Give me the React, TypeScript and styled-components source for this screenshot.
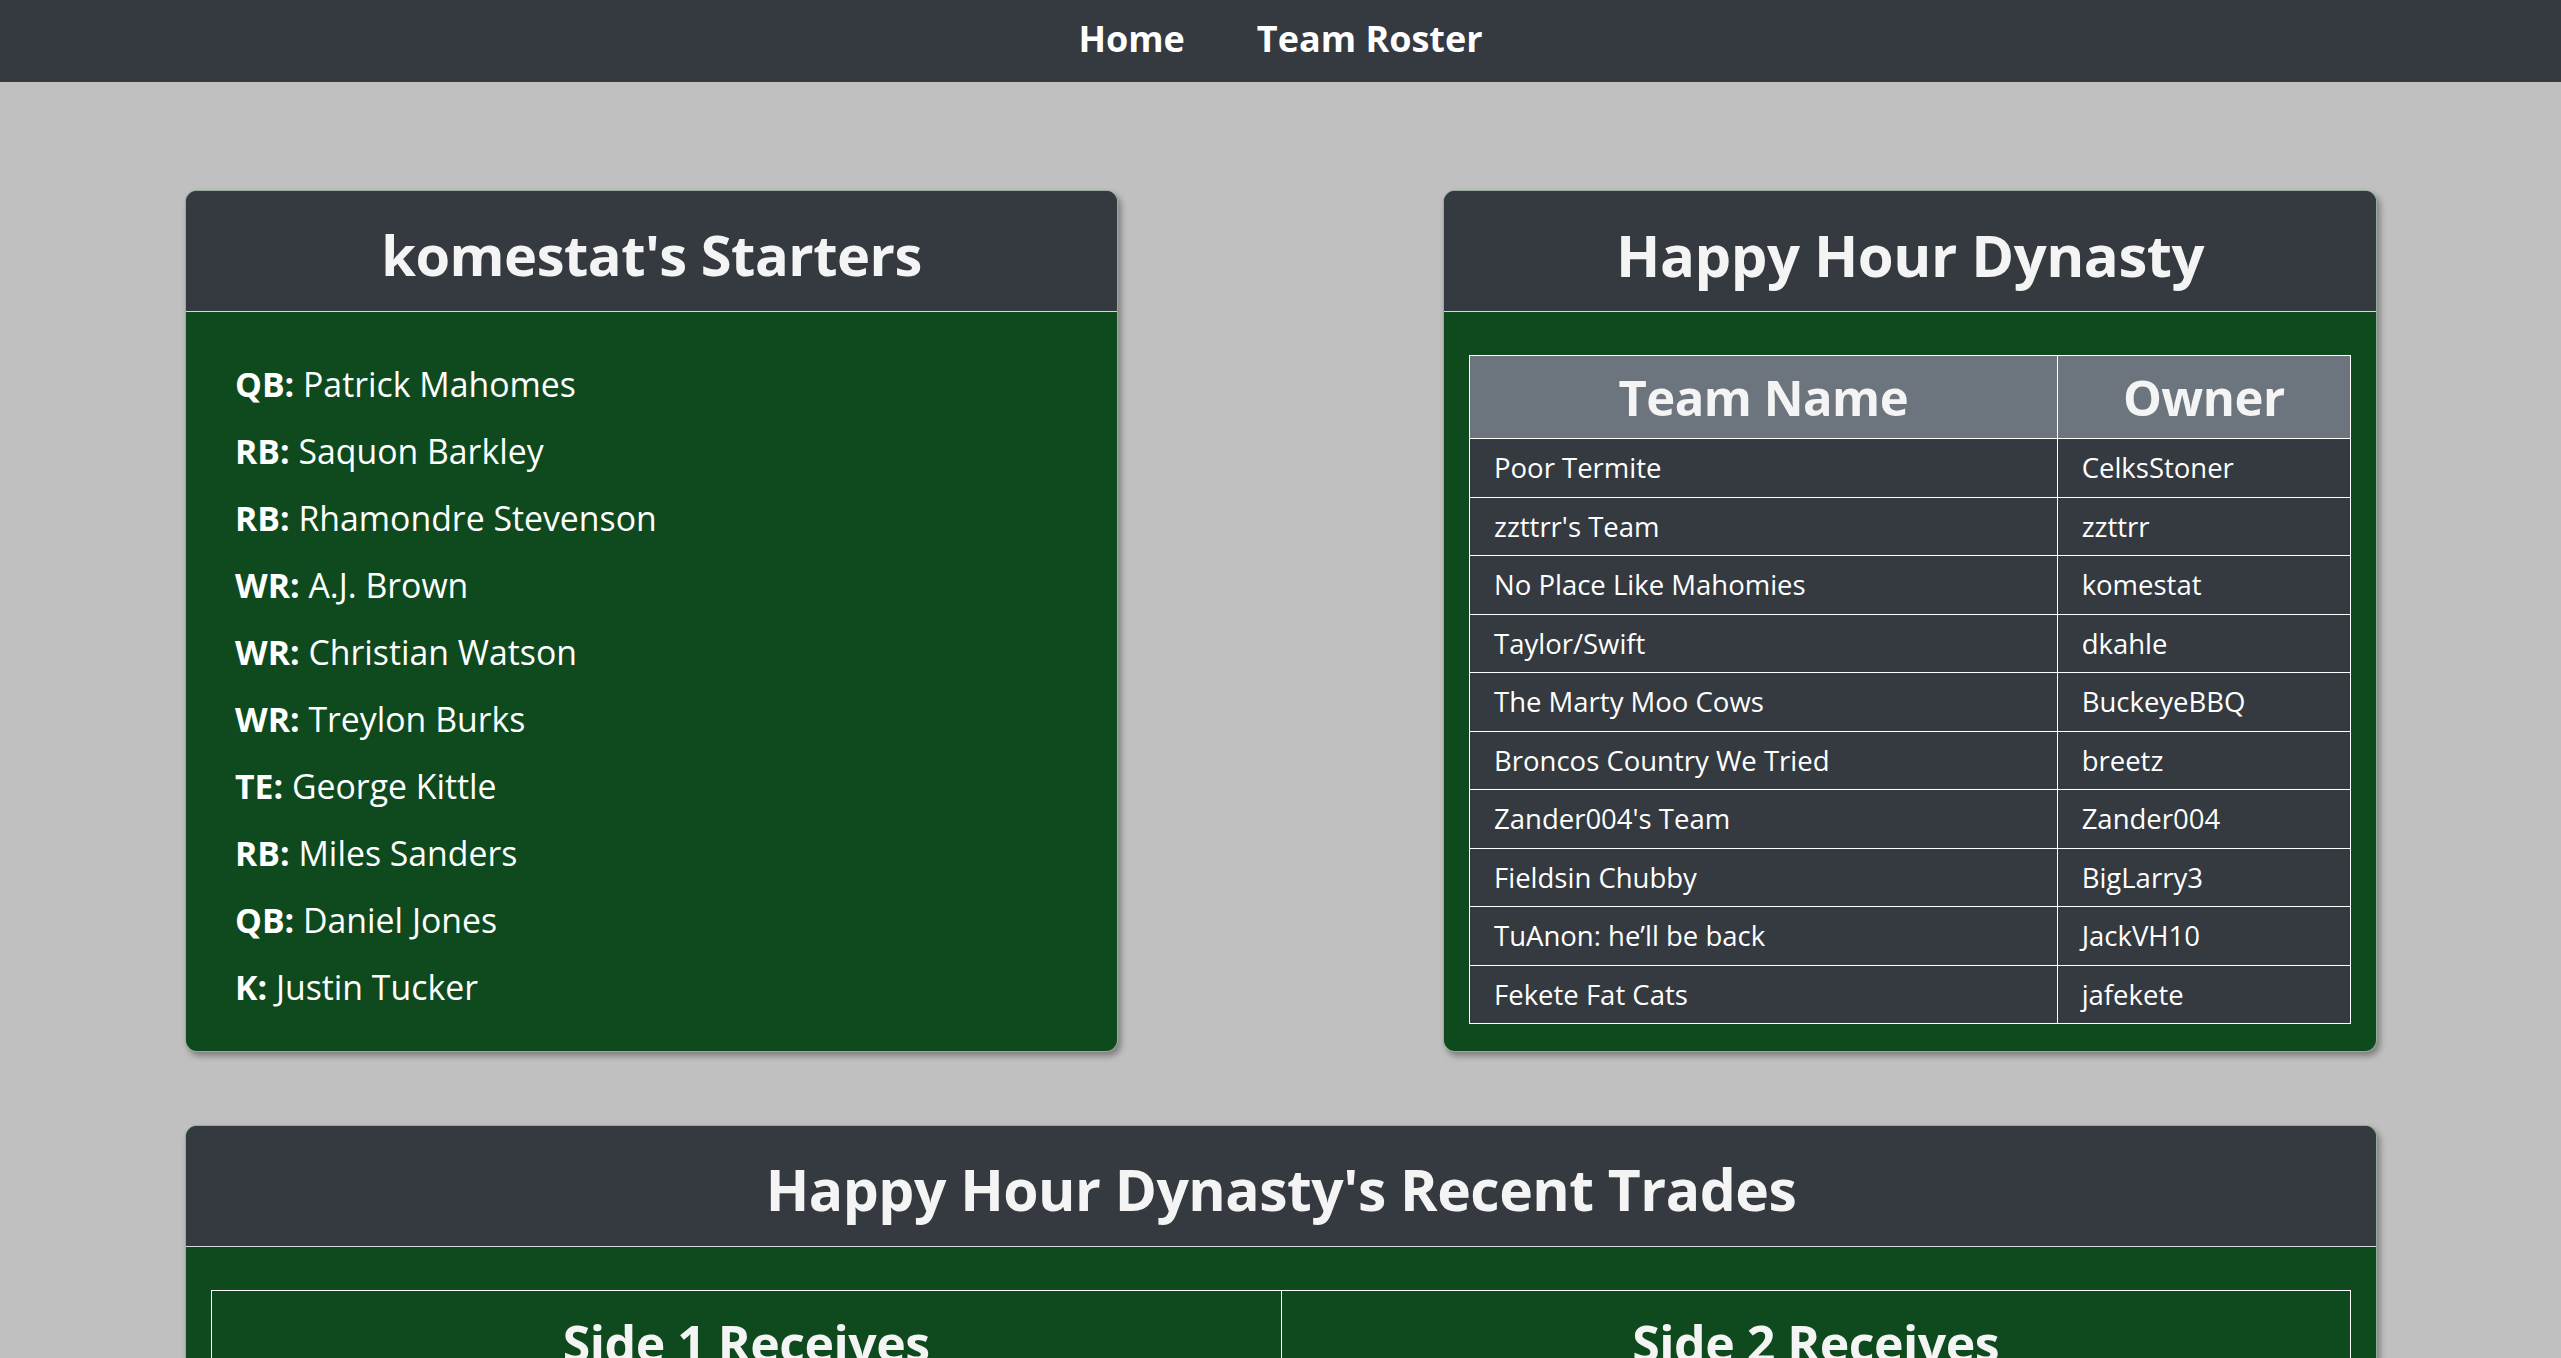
import styled, { createGlobalStyle } from "styled-components";

const GlobalStyle = createGlobalStyle`
    body {
        margin: 0;
        background-color: #c0c0c0;
        font-family: "Open Sans", "Noto Sans", sans-serif;
        color: #f5f5f5;
    }
`

const NavBar = styled.nav`
    height: 82px;
    background-color: #343a40;
    display: flex;
    justify-content: center;
    align-items: center;
    gap: 72px;
    padding-bottom: 6px;
    box-sizing: border-box;
`

const NavLink = styled.a`
    color: white;
    font-weight: 700;
    font-size: 36px;
    text-decoration: none;
    cursor: pointer;
`

const Page = styled.main`
    padding: 108px 184px 0 185px;
`

const TopRow = styled.div`
    display: grid;
    grid-template-columns: 933px 934px;
    justify-content: space-between;
`

const Card = styled.section`
    background-color: #0e4a1e;
    border: 1px solid rgba(255, 255, 255, 0.55);
    border-radius: 12px;
    overflow: hidden;
    box-shadow: 3px 4px 6px rgba(0, 0, 0, 0.35);
    display: flex;
    flex-direction: column;
`

const BottomCard = styled(Card)`
    margin-top: 73px;
`

const CardHeader = styled.header`
    height: 121px;
    background-color: #343a40;
    border-bottom: 1px solid #d8d8d8;
    display: flex;
    justify-content: center;
    align-items: center;
    padding-top: 6px;
    box-sizing: border-box;
`

const Title = styled.h1<{ $size?: number }>`
    margin: 0;
    font-size: ${p => p.$size ?? 58}px;
    font-weight: 700;
    letter-spacing: -0.5px;
    color: #f4f4f4;
`

const CardBody = styled.div`
    padding: 43px 25px 27px 25px;
`

const StarterList = styled.ul`
    list-style: none;
    margin: -4px 0 0 0;
    padding: 0 0 0 24px;
`

const Starter = styled.li`
    font-size: 33.8px;
    line-height: 67px;
    color: white;

    b {
        font-weight: 700;
    }
`

const Table = styled.table`
    width: 100%;
    border-collapse: collapse;
    border: 1px solid white;
`

const HeadCell = styled.th<{ $grey?: boolean }>`
    background-color: ${p => (p.$grey ? "#6c757d" : "transparent")};
    border: 1px solid white;
    font-size: ${p => (p.$grey ? "49px" : "50px")};
    font-weight: 700;
    letter-spacing: -0.5px;
    color: #f4f4f4;
    height: ${p => (p.$grey ? "82px" : "auto")};
    padding: ${p => (p.$grey ? "0 24px" : "18px 24px")};
`

const Row = styled.tr`
    height: 58.5px;
`

const Cell = styled.td`
    background-color: #343a40;
    border: 1px solid white;
    padding: 0 24px;
    font-size: 27.5px;
    color: white;
`

const starters = [
    ["QB", "Patrick Mahomes"],
    ["RB", "Saquon Barkley"],
    ["RB", "Rhamondre Stevenson"],
    ["WR", "A.J. Brown"],
    ["WR", "Christian Watson"],
    ["WR", "Treylon Burks"],
    ["TE", "George Kittle"],
    ["RB", "Miles Sanders"],
    ["QB", "Daniel Jones"],
    ["K", "Justin Tucker"],
]

const teams = [
    ["Poor Termite", "CelksStoner"],
    ["zzttrr's Team", "zzttrr"],
    ["No Place Like Mahomies", "komestat"],
    ["Taylor/Swift", "dkahle"],
    ["The Marty Moo Cows", "BuckeyeBBQ"],
    ["Broncos Country We Tried", "breetz"],
    ["Zander004's Team", "Zander004"],
    ["Fieldsin Chubby", "BigLarry3"],
    ["TuAnon: he\u2019ll be back", "JackVH10"],
    ["Fekete Fat Cats", "jafekete"],
]

export default function App() {
    return (
        <>
            <GlobalStyle />
            <NavBar>
                <NavLink>Home</NavLink>
                <NavLink>Team Roster</NavLink>
            </NavBar>
            <Page>
                <TopRow>
                    <Card>
                        <CardHeader>
                            <Title $size={56}>komestat's Starters</Title>
                        </CardHeader>
                        <CardBody>
                            <StarterList>
                                {starters.map(([pos, name], i) => (
                                    <Starter key={i}><b>{pos}:</b> {name}</Starter>
                                ))}
                            </StarterList>
                        </CardBody>
                    </Card>
                    <Card>
                        <CardHeader>
                            <Title>Happy Hour Dynasty</Title>
                        </CardHeader>
                        <CardBody>
                            <Table>
                                <thead>
                                    <tr>
                                        <HeadCell $grey style={{ width: "66.7%" }}>Team Name</HeadCell>
                                        <HeadCell $grey>Owner</HeadCell>
                                    </tr>
                                </thead>
                                <tbody>
                                    {teams.map(([team, owner]) => (
                                        <Row key={owner}>
                                            <Cell>{team}</Cell>
                                            <Cell>{owner}</Cell>
                                        </Row>
                                    ))}
                                </tbody>
                            </Table>
                        </CardBody>
                    </Card>
                </TopRow>
                <BottomCard>
                    <CardHeader>
                        <Title $size={57}>Happy Hour Dynasty's Recent Trades</Title>
                    </CardHeader>
                    <CardBody>
                        <Table>
                            <thead>
                                <tr>
                                    <HeadCell>Side 1 Receives</HeadCell>
                                    <HeadCell>Side 2 Receives</HeadCell>
                                </tr>
                            </thead>
                        </Table>
                    </CardBody>
                </BottomCard>
            </Page>
        </>
    );
}
